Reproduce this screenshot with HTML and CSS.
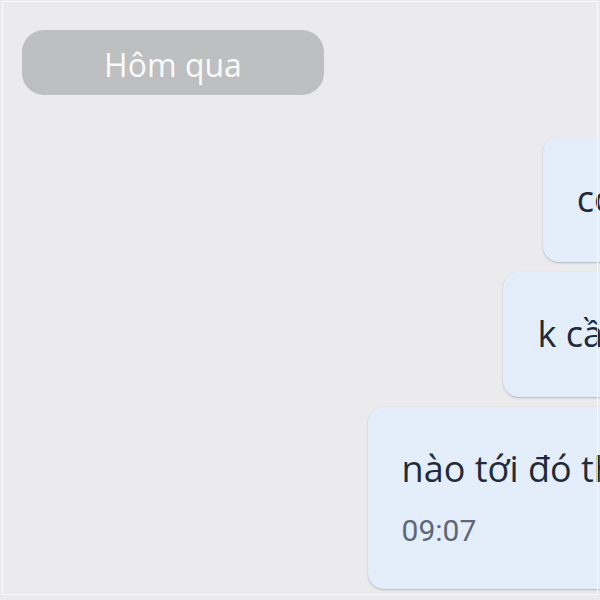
FILE: index.html
```html
<!DOCTYPE html>
<html lang="vi">
<head>
<meta charset="utf-8">
<title>Chat</title>
<link rel="stylesheet" href="styles.css">
</head>
<body>
<main class="chat">
  <div class="date-chip">Hôm qua</div>
  <div class="messages">
    <div class="bubble"><p class="text">có,</p></div>
    <div class="bubble"><p class="text">k cần</p></div>
    <div class="bubble">
      <p class="text">nào tới đó thì</p>
      <p class="time">09:07</p>
    </div>
  </div>
</main>
<div class="frame"></div>
</body>
</html>
```
FILE: styles.css
```css
html, body {
  margin: 0;
  padding: 0;
  overflow: hidden;
  height: 100%;
}
body {
  background: #ebebed;
  font-family: "Open Sans", "Noto Sans", sans-serif;
}
.chat {
  padding: 30px 0 0 22px;
}
.date-chip {
  width: 302px;
  height: 65px;
  box-sizing: border-box;
  padding-top: 3px;
  border-radius: 22px;
  background: #bebfc1;
  color: #fafafb;
  font-size: 32px;
  display: flex;
  align-items: center;
  justify-content: center;
}
.messages {
  width: 637px;
  margin-top: 42px;
  display: flex;
  flex-direction: column;
  align-items: flex-end;
  gap: 10px;
}
.bubble {
  background: #e4eefb;
  border-radius: 16px;
  padding: 36px 34px 37px 34px;
  box-shadow: 0 1px 2px rgba(70, 90, 120, 0.35);
  white-space: nowrap;
}
.text {
  margin: 0;
  font-size: 36px;
  line-height: 52px;
  color: #1f2a3b;
}
.time {
  margin: 15px 0 0;
  font-family: Roboto, "Open Sans", sans-serif;
  font-size: 30px;
  line-height: 42px;
  color: #5d6877;
}
.frame {
  position: fixed;
  left: 2px;
  top: 1px;
  width: 596px;
  height: 594px;
  box-sizing: border-box;
  border: 1px solid rgba(255, 255, 255, 0.75);
  pointer-events: none;
}
```
